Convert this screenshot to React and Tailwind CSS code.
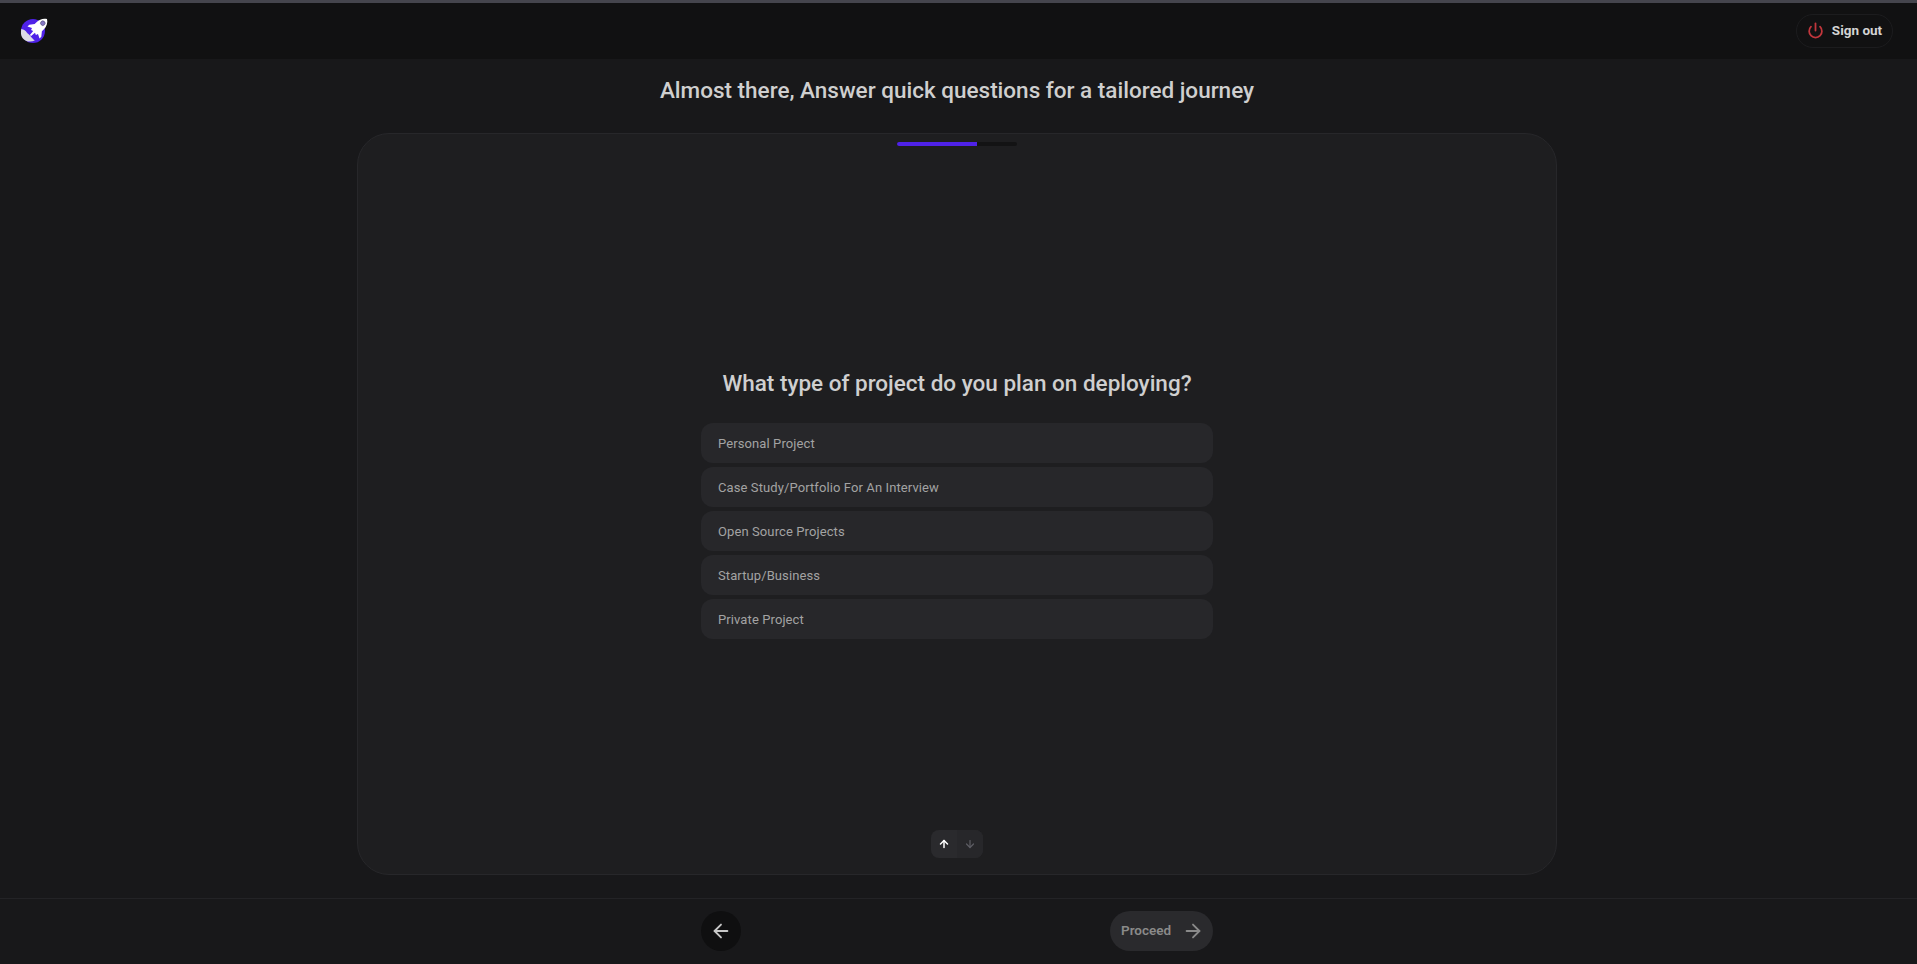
import React from 'react';
import { ArrowLeft, ArrowRight, ArrowUp, ArrowDown, Power } from 'lucide-react';

const OPTIONS = [
  'Personal Project',
  'Case Study/Portfolio For An Interview',
  'Open Source Projects',
  'Startup/Business',
  'Private Project',
];

function Logo() {
  return (
    <svg width="28" height="28" viewBox="0 0 28 28" fill="none">
      <circle cx="13" cy="14" r="12" fill="#4f22e8" />
      <path d="M1.300 12c2.700.6 4.500 1.800 5.500 3.600 1 1.500 2.800 2.200 3.800 3.700.8 1.200 2.400 3 4.200 4.300-4.500 2-9.600 1-12.300-2.600C.700 18.700.700 15 1.300 12Z" fill="#dcdae6" />
      <g transform="translate(19.500 9.500) rotate(45) scale(0.85)">
        <path
          d="M0-12.500C4-10 6-6 6-1L6 2L10 7L10 10L5 7.500L4 10L1.500 9L1 15L-1 15L-1.500 9L-4 10L-5 7.500L-10 10L-10 7L-6 2L-6-1C-6-6-4-10 0-12.500Z"
          fill="#fff"
        />
        <circle cx="0" cy="-5.500" r="2.700" fill="#8678c4" stroke="#3b3466" strokeWidth="0.6" />
      </g>
    </svg>
  );
}

export default function App() {
  return (
    <div className="h-screen flex flex-col bg-[#18181a] font-['Roboto',sans-serif] overflow-hidden">
      <div className="h-[3px] bg-[#45454d]" />

      {/* Top bar */}
      <header className="h-[56px] flex items-center justify-between pl-[20px] pr-6 bg-[#111112]">
        <Logo />
        <button
          type="button"
          className="h-[34px] w-[97px] pb-px flex items-center justify-center gap-2 rounded-full border border-[#1c1c1e] text-[13.5px] font-bold text-[#d4d4d4]"
        >
          <Power className="w-[17px] h-[17px] text-[#c2363c]" strokeWidth={2.5} />
          Sign out
        </button>
      </header>

      <h1 className="h-[74px] pt-[15px] pr-[3px] text-center text-[22.5px] leading-[33px] font-medium text-[#cfcfcf]">
        Almost there, Answer quick questions for a tailored journey
      </h1>

      {/* Question card */}
      <main className="h-[742px] w-[1200px] ml-[357px] flex flex-col items-center rounded-[32px] border border-[#27272a] bg-[#1e1e20]">
        <div className="mt-2 w-[120px] h-1 shrink-0 rounded-full bg-[#131314] overflow-hidden">
          <div className="w-2/3 h-full bg-[#4f22e8]" />
        </div>

        <div className="flex-1 flex flex-col items-center justify-center pt-[29px]">
          <h2 className="text-[22.5px] leading-[33px] font-medium text-[#cfcfcf]">
            What type of project do you plan on deploying?
          </h2>
          <div className="mt-[23px] w-lg flex flex-col gap-1">
            {OPTIONS.map((option) => (
              <button
                type="button"
                key={option}
                className="h-10 pl-[17px] pt-[2px] flex items-center rounded-xl bg-[#27272a] text-[13px] tracking-[0.1px] text-[#a3a3a3]"
              >
                {option}
              </button>
            ))}
          </div>
        </div>

        <div className="mb-4 flex h-7 w-[52px] shrink-0 rounded-lg bg-[#2a2a2d] overflow-hidden">
          <div className="w-[26px] flex items-center justify-center">
            <ArrowUp className="w-3 h-3 text-white" strokeWidth={3} />
          </div>
          <div className="w-[26px] flex items-center justify-center bg-[#27272a]">
            <ArrowDown className="w-3 h-3 text-[#5c5c63]" strokeWidth={2.5} />
          </div>
        </div>
      </main>

      {/* Footer nav */}
      <footer className="mt-[23px] flex-1 pr-[3px] pb-[2px] border-t border-[#232326] flex items-center justify-center">
        <div className="w-lg flex items-center justify-between">
          <button
            type="button"
            className="w-10 h-10 flex items-center justify-center rounded-full bg-[#0f0f10] text-[#c8c8c8]"
          >
            <ArrowLeft className="w-[22px] h-[22px]" />
          </button>
          <button
            type="button"
            className="w-[103px] h-10 flex items-center justify-between pl-[11px] pr-[9px] rounded-full bg-[#2a2a2d] text-[13.5px] font-semibold text-[#8a8a8a]"
          >
            Proceed
            <ArrowRight className="w-[22px] h-[22px]" />
          </button>
        </div>
      </footer>
    </div>
  );
}
